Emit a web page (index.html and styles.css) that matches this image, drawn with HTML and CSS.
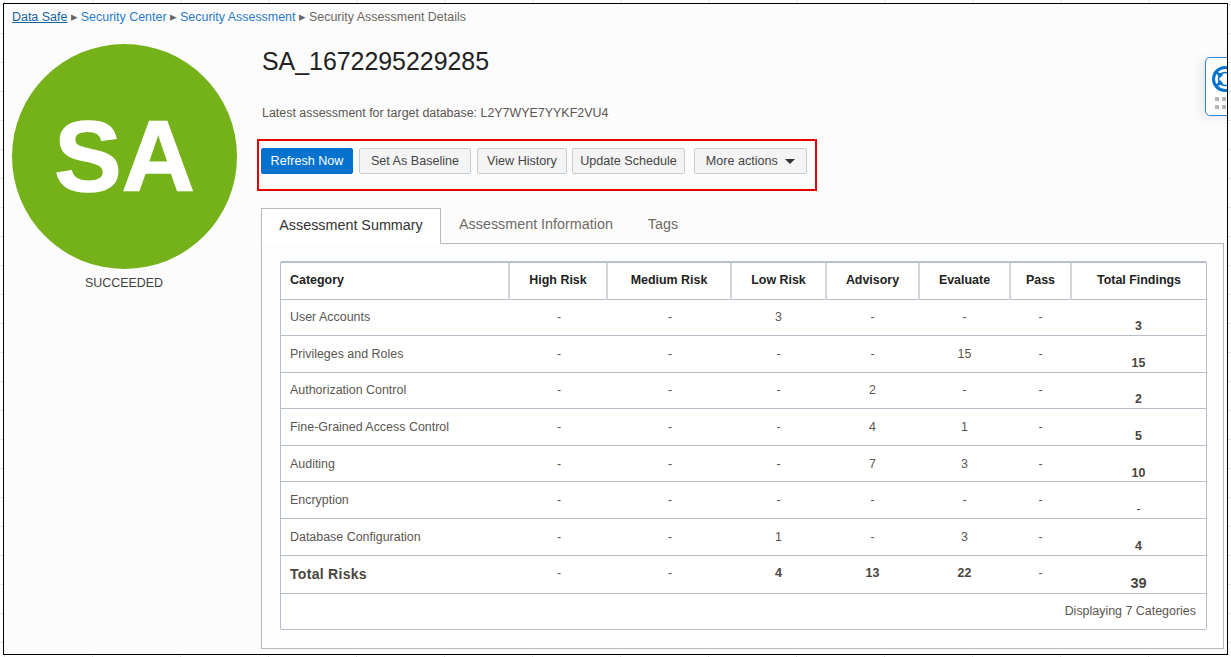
FILE: index.html
```html
<!DOCTYPE html>
<html lang="en">
<head>
<meta charset="utf-8">
<title>Security Assessment Details</title>
<link rel="stylesheet" href="styles.css">
</head>
<body>
<div class="frame">
  <nav class="crumbs">
    <a class="crumb crumb-first" href="#">Data Safe</a><span class="sep">&#9656;</span>
    <a class="crumb" href="#">Security Center</a><span class="sep">&#9656;</span>
    <a class="crumb" href="#">Security Assessment</a><span class="sep">&#9656;</span>
    <span class="crumb-current">Security Assessment Details</span>
  </nav>
  <div class="content">
    <aside class="side">
      <div class="avatar">SA</div>
      <div class="status">SUCCEEDED</div>
    </aside>
    <main class="main">
      <h1 class="title">SA_1672295229285</h1>
      <p class="subtitle">Latest assessment for target database: L2Y7WYE7YYKF2VU4</p>
      <div class="actions">
        <button class="btn btn-primary btn-refresh">Refresh Now</button>
        <button class="btn btn-baseline">Set As Baseline</button>
        <button class="btn btn-history">View History</button>
        <button class="btn btn-schedule">Update Schedule</button>
        <button class="btn btn-more">More actions <span class="caret"></span></button>
      </div>
      <div class="tabs">
        <div class="tab tab-active">Assessment Summary</div>
        <div class="tab tab-info">Assessment Information</div>
        <div class="tab tab-tags">Tags</div>
      </div>
      <section class="panel">
        <div class="table-box">
          <table class="grid">
            <colgroup>
              <col class="c1"><col class="c2"><col class="c3"><col class="c4"><col class="c5"><col class="c6"><col class="c7"><col class="c8">
            </colgroup>
            <thead>
              <tr><th class="left">Category</th><th>High Risk</th><th>Medium Risk</th><th>Low Risk</th><th>Advisory</th><th>Evaluate</th><th>Pass</th><th>Total Findings</th></tr>
            </thead>
            <tbody>
              <tr><td class="left">User Accounts</td><td class="nudge">-</td><td class="nudge">-</td><td>3</td><td>-</td><td>-</td><td>-</td><td class="total">3</td></tr>
              <tr><td class="left">Privileges and Roles</td><td class="nudge">-</td><td class="nudge">-</td><td>-</td><td>-</td><td>15</td><td>-</td><td class="total">15</td></tr>
              <tr><td class="left">Authorization Control</td><td class="nudge">-</td><td class="nudge">-</td><td>-</td><td>2</td><td>-</td><td>-</td><td class="total">2</td></tr>
              <tr><td class="left">Fine-Grained Access Control</td><td class="nudge">-</td><td class="nudge">-</td><td>-</td><td>4</td><td>1</td><td>-</td><td class="total">5</td></tr>
              <tr><td class="left">Auditing</td><td class="nudge">-</td><td class="nudge">-</td><td>-</td><td>7</td><td>3</td><td>-</td><td class="total">10</td></tr>
              <tr><td class="left">Encryption</td><td class="nudge">-</td><td class="nudge">-</td><td>-</td><td>-</td><td>-</td><td>-</td><td class="total dash">-</td></tr>
              <tr><td class="left">Database Configuration</td><td class="nudge">-</td><td class="nudge">-</td><td>1</td><td>-</td><td>3</td><td>-</td><td class="total">4</td></tr>
              <tr class="sum"><td class="left">Total Risks</td><td class="plain nudge">-</td><td class="plain nudge">-</td><td>4</td><td>13</td><td>22</td><td class="plain">-</td><td class="total">39</td></tr>
            </tbody>
          </table>
          <div class="tfoot">Displaying 7 Categories</div>
        </div>
      </section>
    </main>
  </div>
  <div class="help">
    <svg class="help-icon" width="30" height="30" viewBox="0 0 30 30" aria-hidden="true">
      <circle cx="15" cy="15" r="11.5" fill="none" stroke="#0572ce" stroke-width="3"/>
      <circle cx="15" cy="15" r="6.5" fill="#fff" stroke="#0572ce" stroke-width="1.5"/>
      <path d="M6 8l6 3-2 2zM24 8l-6 3 2 2zM6 22l6-3-2-2zM24 22l-6-3 2-2z" fill="#0572ce" stroke="#0572ce" stroke-width="1.5"/>
    </svg>
    <div class="dots"><i></i><i></i><i></i><i></i><i></i><i></i></div>
  </div>
</div>
</body>
</html>
```
FILE: styles.css
```css
* { box-sizing: border-box; }
html, body { margin: 0; height: 657px; overflow: hidden; }
body {
  background-color: #fff;
  background-image:
    linear-gradient(#e4e4e4 1px, transparent 1px),
    linear-gradient(90deg, #e4e4e4 1px, transparent 1px);
  background-size: 88px 29px;
  background-position: 4px 4px;
  font-family: "Liberation Sans", Arial, sans-serif;
  font-size: 12.45px;
  color: #5b5652;
}
.frame {
  position: relative;
  width: 1225px;
  height: 652px;
  margin: 3px 0 0 3px;
  border: 1px solid #000;
  background: #fcfcfc;
  overflow: hidden;
}
.crumbs { display: flex; height: 20px; padding: 6px 0 0 8px; line-height: 14px; white-space: nowrap; }
.crumb { color: #2a7ac7; text-decoration: none; }
.crumb-first { color: #15639f; text-decoration: underline; }
.crumb-current { color: #6b6762; }
.sep { width: 13.5px; text-align: center; color: #666; font-size: 13px; }
.content { display: flex; }
.side { width: 253px; padding: 20px 0 0 8px; flex: none; }
.avatar {
  width: 225px; height: 225px; border-radius: 50%;
  background: #75b118; color: #fff;
  display: flex; align-items: center; justify-content: center;
  font-weight: 700; font-size: 101px;
  -webkit-text-stroke: 1.5px #fff;
}
.status { width: 224px; margin-top: 7px; text-align: center; line-height: 14px; color: #444; }
.main { flex: none; width: 966px; padding-top: 22px; }
.title { margin: 0 0 0 5px; font-weight: 400; font-size: 24.9px; line-height: 30px; color: #222; }
.subtitle { margin: 30px 0 0 5px; line-height: 14px; }
.actions {
  display: flex; align-items: flex-start;
  width: 560px; height: 52px;
  margin-top: 19px; padding: 7px 0 0 2px;
  border: 2px solid #e60000;
}
.btn {
  height: 26px; padding: 0 0 1px; margin: 0;
  border: 1px solid #c4ced7; border-radius: 2px;
  background: #f4f4f4; color: #444;
  font: 12.6px "Liberation Sans", Arial, sans-serif;
  flex: none;
}
.btn-primary { background: #0572ce; border-color: #0572ce; color: #fff; }
.btn-refresh { width: 92px; }
.btn-baseline { width: 112px; margin-left: 6px; }
.btn-history { width: 90px; margin-left: 6px; }
.btn-schedule { width: 113px; margin-left: 5px; }
.btn-more { width: 113px; margin-left: 9px; }
.caret {
  display: inline-block; width: 0; height: 0; margin-left: 4px; vertical-align: 1px;
  border-left: 5px solid transparent; border-right: 5px solid transparent; border-top: 5px solid #333;
}
.tabs { display: flex; margin: 17px 0 0 4px; height: 36px; position: relative; z-index: 1; }
.tab { font-size: 14.35px; line-height: 34px; color: #6f6b67; white-space: nowrap; }
.tab-active {
  width: 180px; height: 36px; text-align: center; color: #333; background: #fff;
  border: 1px solid #b8bbbe; border-bottom: 0; line-height: 33px;
}
.tab-info { margin-left: 18px; line-height: 33px; }
.tab-tags { margin-left: 35px; line-height: 33px; }
.panel {
  width: 963px; height: 406px; margin: -1px 0 0 4px;
  padding: 17px 16px 0 18px;
  border: 1px solid #b8bbbe; background: #fdfdfd;
}
.table-box { width: 927px; height: 369px; border: 1px solid #b8bec8; border-top-width: 2px; border-radius: 2px; background: #fff; }
.grid { width: 925px; table-layout: fixed; border-collapse: collapse; }
.c1 { width: 228px; } .c2 { width: 98px; } .c3 { width: 124px; } .c4 { width: 95px; }
.c5 { width: 93px; } .c6 { width: 91px; } .c7 { width: 61px; } .c8 { width: 135px; }
.grid th {
  height: 36px; padding: 0 0 2px; color: #222; font-weight: 700; font-size: 12.45px;
  border-bottom: 1px solid #b8bec8; border-left: 2px solid #d2d5da;
}
.grid th.left { border-left: 0; }
.grid td {
  height: 36.6px; padding: 0; text-align: center; color: #5b5652; line-height: 14px;
  border-bottom: 1px solid #b8bec8;
}
.grid .left { text-align: left; padding-left: 9px; }
.grid td.nudge { padding-left: 2px; }
.grid td.total { font-weight: 700; color: #4a4540; padding: 18px 0 0; font-size: 12.45px; }
.grid td.dash { font-weight: 400; }
.grid .sum td { height: 38px; font-weight: 700; color: #4a4540; padding-bottom: 2px; }
.grid .sum td.left { font-size: 14px; letter-spacing: .3px; padding-bottom: 0; }
.grid .sum td.plain { font-weight: 400; color: #5b5652; }
.grid .sum td.total { font-size: 14.5px; padding: 17px 0 0; }
.tfoot { padding: 10px 10px 0 0; text-align: right; line-height: 14px; color: #5b5652; }
.help {
  position: absolute; left: 1201px; top: 53px;
  width: 40px; height: 59px;
  background: #fff; border: 1px solid #2f86d6; border-radius: 5px;
  box-shadow: -4px 2px 10px rgba(0,0,0,.08);
}
.help-icon { position: absolute; left: 4px; top: 6px; }
.dots { position: absolute; left: 9px; top: 39px; display: grid; grid-template-columns: repeat(3, 4px); gap: 4px 3px; }
.dots i { display: block; width: 4px; height: 4px; background: #b5b5b5; }
```
